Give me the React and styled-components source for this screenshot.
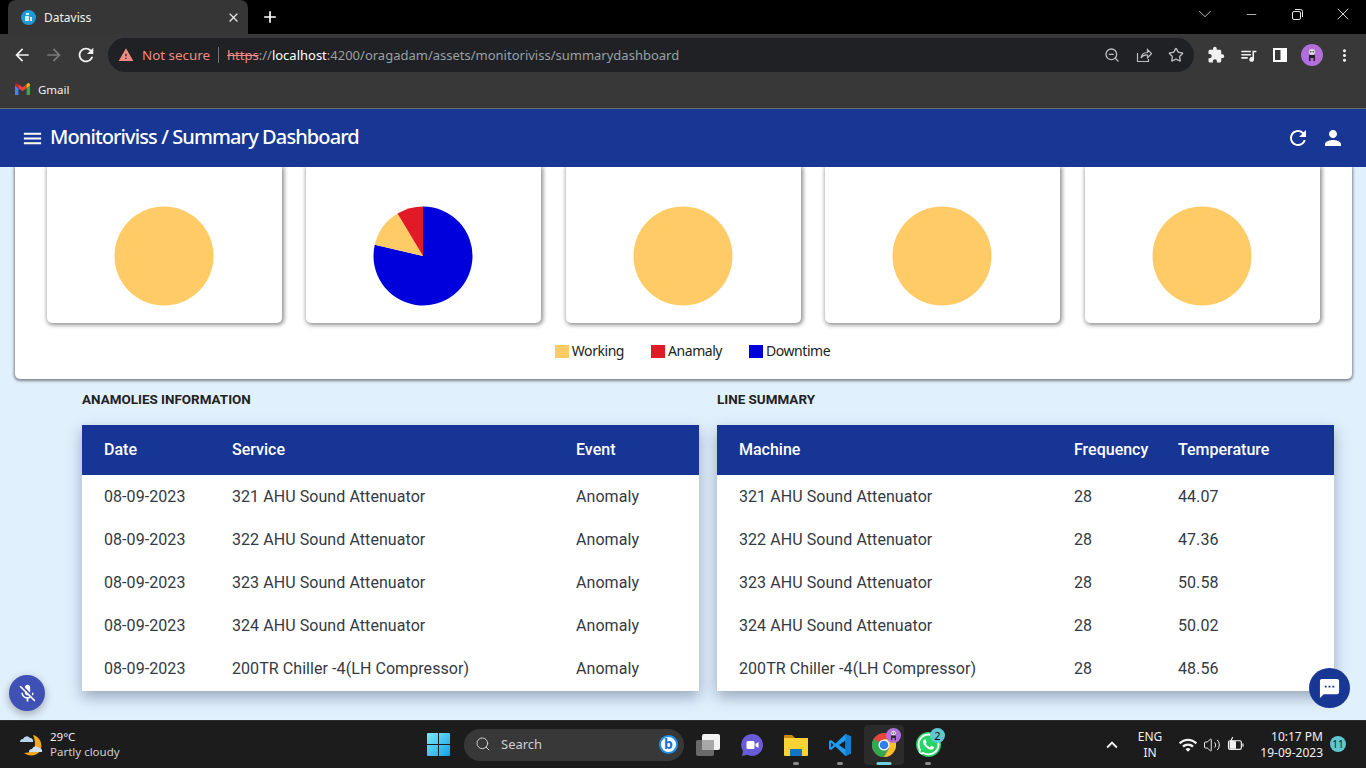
import React from "react";
import styled, { createGlobalStyle } from "styled-components";
import { MdMenu, MdRefresh, MdPerson, MdMicOff, MdSms, MdExtension, MdQueueMusic, MdMoreVert, MdArrowBack, MdArrowForward, MdClose, MdAdd, MdWifi, MdWarning, MdKeyboardArrowUp } from "react-icons/md";
import { FaWhatsapp } from "react-icons/fa";
import { Star, ZoomOut, Search, Volume2, ChevronDown, Minus, X } from "lucide-react";

const Global = createGlobalStyle`
  html, body { margin: 0; padding: 0; overflow: hidden; background: #e1f0fd; }
  * { box-sizing: border-box; }
`;

const Screen = styled.div`
  position: relative; width: 1366px; height: 768px; overflow: hidden;
  display: flex; flex-direction: column;
  font-family: Roboto, "Liberation Sans", sans-serif; background: #e1f0fd;
`;

/* ---------- browser chrome ---------- */
const TabStrip = styled.div`
  height: 34px; background: #000; display: flex; align-items: flex-end; padding-left: 8px; color: #fff;
`;
const Tab = styled.div`
  width: 240px; height: 34px; background: #363636; border-radius: 8px 8px 0 0;
  display: flex; align-items: center; padding: 0 6px 0 13px;
  font: 12px "Noto Sans", sans-serif; color: #f1f1f1;
`;
const Favicon = styled.span`
  width: 15px; height: 15px; border-radius: 50%; background: #1e9bd6; margin-right: 8px;
  display: flex; align-items: center; justify-content: center;
`;
const TabTitle = styled.span` flex: 1; `;
const NewTab = styled.div`
  width: 44px; height: 34px; display: flex; align-items: center; justify-content: center;
`;
const WindowControls = styled.div`
  margin-left: auto; display: flex; height: 34px; align-items: center;
`;
const WinBtn = styled.div`
  width: 46px; height: 30px; margin-bottom: 6px; display: flex; align-items: center; justify-content: center; color: #e8e8e8;
`;
const Toolbar = styled.div`
  height: 42px; background: #383838; display: flex; align-items: center; padding: 0 5px 0 6px;
`;
const ToolBtn = styled.div`
  width: 32px; height: 32px; flex: none; display: flex; align-items: center; justify-content: center;
  color: ${p => p.$c || "#f1f1f1"};
`;
const Omnibox = styled.div`
  width: 1086px; height: 34px; margin: 0 6px; border-radius: 17px; background: #202124;
  display: flex; align-items: center; padding-left: 10px; flex: none;
  font: 13px "Noto Sans", sans-serif; white-space: nowrap;
`;
const NotSecure = styled.span` color: #f28b82; margin-left: 8px; font-size: 13.4px; `;
const Divider = styled.span` width: 1px; height: 16px; background: #70757a; margin: 0 8px 0 8px; `;
const Strike = styled.span` color: #f28b82; text-decoration: line-through; `;
const UrlDim = styled.span` color: #9aa0a6; `;
const UrlHost = styled.span` color: #fff; `;
const OmniRight = styled.div` margin-left: auto; display: flex; padding-right: 2px; `;
const Avatar = styled.div`
  width: 22px; height: 22px; border-radius: 50%; background: #b26fdc; display: flex; align-items: center; justify-content: center;
`;
const BookmarkBar = styled.div`
  height: 33px; background: #383838; border-bottom: 1px solid #6b6b6b; display: flex; align-items: center; padding: 0 0 6px 15px;
  font: 11.5px "Noto Sans", sans-serif; color: #f1f1f1; gap: 8px;
`;

/* ---------- app ---------- */
const AppBar = styled.header`
  height: 58px; background: #183693; color: #fff; display: flex; align-items: center; padding: 0 21px; flex: none;
`;
const AppTitle = styled.h1`
  margin: -3px 0 0 6px; font: 500 20px "Noto Sans", sans-serif; letter-spacing: -0.9px; color: #fff;
`;
const AppActions = styled.div` margin-left: auto; display: flex; gap: 11px; align-items: center; `;

const Main = styled.main` flex: 1; min-height: 0; overflow: hidden; `;
const ChartPanel = styled.section`
  width: 1337px; height: 212px; margin-left: 15px; background: #fff; border-radius: 0 0 5px 5px;
  box-shadow: 0 1px 3px 1px rgba(0,0,0,.45); padding: 0 32px;
`;
const CardGrid = styled.div`
  display: grid; grid-template-columns: repeat(5, 235px); column-gap: 24.4px;
`;
const ChartCard = styled.div`
  height: 156px; background: #fff; border-radius: 0 0 5px 5px; padding: 38.5px 1px 0 0;
  box-shadow: 1px 1px 4px 1px rgba(0,0,0,.45); display: flex; justify-content: center;
`;
const Legend = styled.div`
  display: flex; justify-content: center; gap: 27px; margin-top: 20px; padding-left: 18px;
  font: 14px/16px "Noto Sans", sans-serif; letter-spacing: -0.45px; color: #222; height: 16px; align-items: center;
`;
const LegendItem = styled.span` display: flex; align-items: center; gap: 3px; `;
const Swatch = styled.span` width: 14px; height: 13px; background: ${p => p.$c}; `;

const Tables = styled.div`
  display: grid; grid-template-columns: 617px 617px; column-gap: 18px; padding: 13px 0 0 82px;
`;
const SectionTitle = styled.h2`
  margin: 0 0 17px; font: 700 13.45px/16px Roboto, sans-serif; color: #222; height: 16px;
`;
const Table = styled.div`
  background: #fff; box-shadow: 0 6px 14px rgba(40,60,90,.4); padding-bottom: 1px;
`;
const Row = styled.div`
  display: grid; grid-template-columns: ${p => p.$cols}; padding-left: 22px; height: 43px; align-items: center;
  font-size: 16px; letter-spacing: 0.07px; color: #333a44;
`;
const HeadRow = styled(Row)`
  height: 50px; padding-bottom: 2px; background: #163595; color: #fff; font-weight: 500; letter-spacing: 0;
`;

/* ---------- taskbar ---------- */
const Taskbar = styled.footer`
  height: 48px; background: #1c1c1c; border-top: 1px solid #2e2e2e; display: flex; align-items: center; flex: none; color: #fff;
  font: 12px "Noto Sans", sans-serif;
`;
const Weather = styled.div` width: 416px; padding-left: 18px; display: flex; align-items: center; gap: 6px; flex: none; `;
const WeatherText = styled.div` font-size: 11.5px; line-height: 15px; color: #f1f1f1; margin-top: -2px; `;
const WeatherSub = styled.div` color: #cfcfcf; `;
const TaskBtn = styled.div`
  position: relative; width: 44px; height: 44px; flex: none; display: flex; align-items: center; justify-content: center;
  border-radius: 6px; border: 2px solid transparent; background-clip: padding-box;
  background-color: ${p => p.$active ? "#2b2b2b" : "transparent"};
`;
const SearchBox = styled.div`
  width: 220px; height: 32px; margin: 0 2px 0 4px; border-radius: 16px; background: #383838; flex: none;
  display: flex; align-items: center; padding: 0 0 1px 11px; gap: 10px; color: #cfcfcf; font-size: 13px; position: relative;
`;
const BingMark = styled.span`
  position: absolute; right: 6px; top: 6px; width: 19px; height: 19px; border-radius: 50%; background: #fff; border: 2px solid #1e90e8;
  color: #1573d6; font: 700 14px/13px "Noto Sans", sans-serif; text-align: center;
`;
const RunDot = styled.span`
  position: absolute; bottom: 0; left: 50%; transform: translateX(-50%);
  width: ${p => p.$on ? 15 : 6}px; height: 3px; border-radius: 2px; background: ${p => p.$on ? "#6fd0dc" : "#8a8a8a"};
`;
const CountBadge = styled.span`
  position: absolute; top: 3px; right: 3px; width: 15px; height: 15px; border-radius: 50%; background: #5fc6d2; color: #111;
  font-size: 11px; line-height: 15px; text-align: center;
`;
const AvatarBadge = styled.span`
  position: absolute; top: 3px; right: 3px; width: 15px; height: 15px; border-radius: 50%; background: #b26fdc;
  display: flex; align-items: center; justify-content: center;
`;
const Tray = styled.div` margin-left: auto; display: flex; align-items: center; height: 100%; padding-right: 43px; position: relative; `;
const TrayIcon = styled.div` width: 24px; display: flex; justify-content: center; color: #f1f1f1; flex: none; `;
const Lang = styled.div` width: 40px; text-align: center; font-size: 12px; line-height: 16px; color: #f1f1f1; margin: 0 6px; `;
const Clock = styled.div` width: 75px; text-align: right; font-size: 12px; line-height: 16px; color: #f1f1f1; `;
const NotifDot = styled.span`
  position: absolute; right: 20px; top: 15px; width: 16px; height: 16px; border-radius: 50%; background: #5fc6d2; color: #123;
  font-size: 10px; line-height: 16px; text-align: center;
`;

const MicFab = styled.div`
  position: absolute; left: 9px; top: 675px; width: 36px; height: 36px; border-radius: 50%; background: #3f51b5;
  display: flex; align-items: center; justify-content: center; color: #fff; box-shadow: 0 3px 8px rgba(0,0,0,.3);
`;
const ChatFab = styled.div`
  position: absolute; left: 1309px; top: 668px; width: 41px; height: 40px; border-radius: 50%; background: #183693;
  display: flex; align-items: center; justify-content: center; color: #fff;
`;

/* ---------- drawings ---------- */
const Pie = ({ segments }) => {
  const r = 49.5, c = 50;
  const pt = a => [c + r * Math.sin(a * Math.PI / 180), c - r * Math.cos(a * Math.PI / 180)];
  let start = 0;
  return (
    <svg width="100" height="100" viewBox="0 0 100 100">
      {segments.length === 1
        ? <circle cx={c} cy={c} r={r} fill={segments[0][1]} />
        : segments.map(([deg, col]) => {
            const [x1, y1] = pt(start), [x2, y2] = pt(start + deg);
            const d = `M${c} ${c}L${x1} ${y1}A${r} ${r} 0 ${deg > 180 ? 1 : 0} 1 ${x2} ${y2}Z`;
            start += deg;
            return <path key={col} d={d} fill={col} />;
          })}
    </svg>
  );
};
const YELLOW = "#ffcb66", RED = "#e01a27", BLUE = "#0000dc";

const GmailIcon = () => (
  <svg width="15" height="12" viewBox="0 0 15 12">
    <path d="M0 2.5V12h3.4V5.2z" fill="#4285f4" />
    <path d="M15 2.5V12h-3.4V5.2z" fill="#34a853" />
    <path d="M11.6 1.2 7.5 4.3 3.4 1.2v4l4.1 3 4.1-3z" fill="#ea4335" />
    <path d="M0 2.5 3.4 5.2v-4L2 .2C1 -.3 0 .6 0 2.5z" fill="#c5221f" />
    <path d="M15 2.5 11.6 5.2v-4L13 .2c1-.5 2 .4 2 2.3z" fill="#fbbc04" />
  </svg>
);
const ShareIcon = () => (
  <svg width="16" height="16" viewBox="0 0 16 16" fill="none" stroke="#bdbdbd" strokeWidth="1.2">
    <path d="M1.5 6v8.5h11V12" />
    <path d="M5 11c.5-4 3-5.5 6.5-5.5V2.5l4 4.2-4 4V8C8.5 7.7 6.5 8.8 5 11z" />
  </svg>
);
const SideIcon = () => (
  <svg width="14" height="14" viewBox="0 0 14 14">
    <path d="M0 0h14v14H0z" fill="#fff" />
    <path d="M2 2h5.5v10H2z" fill="#383838" />
  </svg>
);
const BotFace = ({ s = 14 }) => (
  <svg width={s} height={s} viewBox="0 0 14 14">
    <circle cx="7" cy="4" r="3" fill="#ddd" />
    <circle cx="5.8" cy="3.8" r=".7" fill="#222" /><circle cx="8.2" cy="3.8" r=".7" fill="#222" />
    <path d="M4 7h6v6H8.5V10h-3v3H4z" fill="#222" />
  </svg>
);
const BatteryIcon = () => (
  <svg width="18" height="15" viewBox="0 0 16 14" fill="none" stroke="#f1f1f1" strokeWidth="1.1">
    <rect x="1" y="3.5" width="12" height="8" rx="1.5" />
    <path d="M14.5 6v3" />
    <path d="M2 4h6v7H2z" fill="#f1f1f1" stroke="none" />
    <path d="M5 0 3 4h3l-1.5 3" />
  </svg>
);
const WeatherIcon = () => (
  <svg width="26" height="26" viewBox="0 0 26 26">
    <path d="M15 3a11 11 0 0 1 7 16c-3 5-11 6-16 2 6 0 11-3 11-9 0-4-1-6-2-9z" fill="#f5a623" />
    <path d="M2 10a3 3 0 0 1 3-3 4 4 0 0 1 7-1 3 3 0 0 1 3 4z" fill="#b9d4ee" />
    <path d="M11 20a3 3 0 0 1 3-3 4 4 0 0 1 7-1 3 3 0 0 1 3 4z" fill="#cfe2f5" />
  </svg>
);
const WinLogo = () => (
  <svg width="23" height="23" viewBox="0 0 23 23">
    <defs><linearGradient id="w" x1="0" y1="0" x2="1" y2="1"><stop offset="0" stopColor="#7fe6ff" /><stop offset="1" stopColor="#0fa3e8" /></linearGradient></defs>
    <path d="M0 1a1 1 0 0 1 1-1h10v11H0zM12 0h10a1 1 0 0 1 1 1v10H12zM0 12h11v11H1a1 1 0 0 1-1-1zM12 12h11v10a1 1 0 0 1-1 1H12z" fill="url(#w)" />
  </svg>
);
const TaskViewIcon = () => (
  <svg width="24" height="22" viewBox="0 0 24 22">
    <rect x="0" y="6" width="18" height="16" rx="2" fill="#6a6a6a" />
    <rect x="6" y="0" width="18" height="16" rx="2" fill="#f2f2f2" />
    <rect x="6" y="6" width="12" height="10" fill="#a8a8a8" />
  </svg>
);
const MeetIcon = () => (
  <svg width="24" height="24" viewBox="0 0 24 24">
    <path d="M12 1a11 11 0 1 1-5 20.8L2 23l1-5A11 11 0 0 1 12 1z" fill="#6a5bd8" />
    <rect x="6.5" y="8" width="8" height="8" rx="1.5" fill="#fff" />
    <path d="m15.5 11 3-2v6l-3-2z" fill="#fff" />
  </svg>
);
const FolderIcon = () => (
  <svg width="24" height="22" viewBox="0 0 24 22">
    <path d="M0 2a1 1 0 0 1 1-1h7l3 3H0z" fill="#c98a10" />
    <path d="M0 4h24v17a1 1 0 0 1-1 1H1a1 1 0 0 1-1-1z" fill="#fbd234" />
    <path d="M7 15h10a1 1 0 0 1 1 1v6H6v-6a1 1 0 0 1 1-1z" fill="#1274c4" />
  </svg>
);
const VsCodeIcon = () => (
  <svg width="24" height="24" viewBox="0 0 24 24">
    <path d="M17.5 1 23 3.6v16.8L17.5 23 7.5 13.5 3 17l-2-1V8l2-1 4.5 3.5z" fill="#1f9cf0" />
    <path d="M17.5 7.5 11 12l6.5 4.5z" fill="#1c1c1c" />
    <path d="M3 9.5v5L5.5 12z" fill="#1c1c1c" />
    <path d="M17.5 1 23 3.6v16.8L17.5 23z" fill="#0e7fd0" />
  </svg>
);
const ChromeIcon = () => (
  <svg width="24" height="24" viewBox="0 0 24 24">
    <circle cx="12" cy="12" r="12" fill="#e8453c" />
    <path d="M12 12 1.6 6A12 12 0 0 0 12 24l5-9z" fill="#2fa84f" />
    <path d="M12 6h10.4A12 12 0 0 1 12 24l5.2-9z" fill="#fbc02d" />
    <circle cx="12" cy="12" r="5.5" fill="#fff" />
    <circle cx="12" cy="12" r="4.3" fill="#2f80ed" />
  </svg>
);

const leftCols = "128px 344px 1fr";
const rightCols = "335px 104px 1fr";
const services = ["321 AHU Sound Attenuator", "322 AHU Sound Attenuator", "323 AHU Sound Attenuator", "324 AHU Sound Attenuator", "200TR Chiller -4(LH Compressor)"];
const temps = ["44.07", "47.36", "50.58", "50.02", "48.56"];
const allWorking = [[360, YELLOW]];
const charts = [allWorking, [[283, BLUE], [46, YELLOW], [31, RED]], allWorking, allWorking, allWorking];

export default function App() {
  return (
    <Screen>
      <Global />
      <TabStrip>
        <Tab>
          <Favicon><svg width="9" height="8" viewBox="0 0 9 8"><path d="M1 3h4v5H1zM6 4h2v4H6zM2 0h3v2H2z" fill="#d8eefa" /></svg></Favicon>
          <TabTitle>Dataviss</TabTitle>
          <MdClose size={15} color="#e8e8e8" style={{ marginRight: 1 }} />
        </Tab>
        <NewTab><MdAdd size={20} color="#fff" /></NewTab>
        <WindowControls>
          <WinBtn><ChevronDown size={22} strokeWidth={0.9} /></WinBtn>
          <WinBtn><Minus size={15} strokeWidth={1.2} /></WinBtn>
          <WinBtn>
            <svg width="11" height="11" viewBox="0 0 11 11" fill="none" stroke="#e8e8e8"><rect x=".5" y="2.5" width="8" height="8" rx="1.5" /><path d="M3 .5h5.5a2 2 0 0 1 2 2V8" /></svg>
          </WinBtn>
          <WinBtn><X size={20} strokeWidth={1.1} /></WinBtn>
        </WindowControls>
      </TabStrip>
      <Toolbar>
        <ToolBtn><MdArrowBack size={20} /></ToolBtn>
        <ToolBtn $c="#7a7a7a"><MdArrowForward size={20} /></ToolBtn>
        <ToolBtn><MdRefresh size={22} /></ToolBtn>
        <Omnibox>
          <MdWarning size={16} color="#f28b82" />
          <NotSecure>Not secure</NotSecure>
          <Divider />
          <Strike>https</Strike><UrlDim>://</UrlDim><UrlHost>localhost</UrlHost><UrlDim>:4200/oragadam/assets/monitoriviss/summarydashboard</UrlDim>
          <OmniRight>
            <ToolBtn $c="#bdbdbd"><ZoomOut size={16} /></ToolBtn>
            <ToolBtn><ShareIcon /></ToolBtn>
            <ToolBtn $c="#bdbdbd"><Star size={16} /></ToolBtn>
          </OmniRight>
        </Omnibox>
        <ToolBtn><MdExtension size={18} /></ToolBtn>
        <ToolBtn><MdQueueMusic size={19} /></ToolBtn>
        <ToolBtn><SideIcon /></ToolBtn>
        <ToolBtn><Avatar><BotFace /></Avatar></ToolBtn>
        <ToolBtn><MdMoreVert size={19} /></ToolBtn>
      </Toolbar>
      <BookmarkBar><GmailIcon />Gmail</BookmarkBar>

      <AppBar>
        <MdMenu size={23} />
        <AppTitle>Monitoriviss / Summary Dashboard</AppTitle>
        <AppActions>
          <MdRefresh size={24} />
          <MdPerson size={24} />
        </AppActions>
      </AppBar>

      <Main>
        <ChartPanel>
          <CardGrid>
            {charts.map((c, i) => <ChartCard key={i}><Pie segments={c} /></ChartCard>)}
          </CardGrid>
          <Legend>
            <LegendItem><Swatch $c={YELLOW} />Working</LegendItem>
            <LegendItem><Swatch $c={RED} />Anamaly</LegendItem>
            <LegendItem><Swatch $c={BLUE} />Downtime</LegendItem>
          </Legend>
        </ChartPanel>
        <Tables>
          <div>
            <SectionTitle>ANAMOLIES INFORMATION</SectionTitle>
            <Table>
              <HeadRow $cols={leftCols}><span>Date</span><span>Service</span><span>Event</span></HeadRow>
              {services.map(s => <Row key={s} $cols={leftCols}><span>08-09-2023</span><span>{s}</span><span>Anomaly</span></Row>)}
            </Table>
          </div>
          <div>
            <SectionTitle>LINE SUMMARY</SectionTitle>
            <Table>
              <HeadRow $cols={rightCols}><span>Machine</span><span>Frequency</span><span>Temperature</span></HeadRow>
              {services.map((s, i) => <Row key={s} $cols={rightCols}><span>{s}</span><span>28</span><span>{temps[i]}</span></Row>)}
            </Table>
          </div>
        </Tables>
      </Main>

      <Taskbar>
        <Weather>
          <WeatherIcon />
          <WeatherText>29°C<WeatherSub>Partly cloudy</WeatherSub></WeatherText>
        </Weather>
        <TaskBtn><WinLogo /></TaskBtn>
        <SearchBox>
          <Search size={16} strokeWidth={1.5} />
          Search
          <BingMark>b</BingMark>
        </SearchBox>
        <TaskBtn><TaskViewIcon /></TaskBtn>
        <TaskBtn><MeetIcon /></TaskBtn>
        <TaskBtn><FolderIcon /><RunDot /></TaskBtn>
        <TaskBtn><VsCodeIcon /><RunDot /></TaskBtn>
        <TaskBtn $active><ChromeIcon /><AvatarBadge><BotFace s={11} /></AvatarBadge><RunDot $on /></TaskBtn>
        <TaskBtn><FaWhatsapp size={25} color="#fff" style={{ background: "#25d366", borderRadius: "50%" }} /><CountBadge>2</CountBadge><RunDot /></TaskBtn>
        <Tray>
          <TrayIcon><MdKeyboardArrowUp size={22} /></TrayIcon>
          <Lang>ENG<br />IN</Lang>
          <TrayIcon><MdWifi size={20} /></TrayIcon>
          <TrayIcon><Volume2 size={18} strokeWidth={1.3} /></TrayIcon>
          <TrayIcon><BatteryIcon /></TrayIcon>
          <Clock>10:17 PM<br />19-09-2023</Clock>
          <NotifDot>11</NotifDot>
        </Tray>
      </Taskbar>

      <MicFab><MdMicOff size={21} /></MicFab>
      <ChatFab><MdSms size={23} /></ChatFab>
    </Screen>
  );
}
